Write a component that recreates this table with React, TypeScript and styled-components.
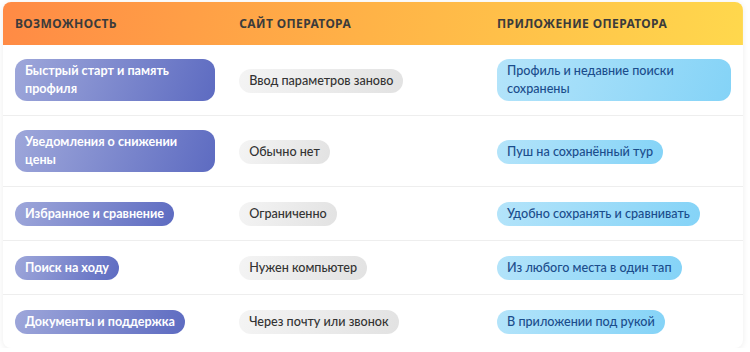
import React from 'react'
import styled, {createGlobalStyle} from 'styled-components';

const GlobalStyle = createGlobalStyle`
    body {
        margin: 0;
        background: #ffffff;
        font-family: "Noto Sans", "Open Sans", sans-serif;
    }
`;

const Page = styled.div`
    padding: 2px 7px 0 3px;
`;

const Card = styled.div`
    background: #fff;
    border-radius: 8px;
    overflow: hidden;
    box-shadow: 0 1px 6px rgba(0,0,0,0.08);
`;

const Table = styled.table`
    width: 100%;
    border-collapse: collapse;
    table-layout: fixed;
`;

const HeadRow = styled.tr`
    background: linear-gradient(100deg, #ff8a45 0%, #ffb347 50%, #ffd84d 100%);
`;

const HeadCell = styled.th<{w: string}>`
    width: ${p => p.w};
    height: 43px;
    padding: 0 12px;
    text-align: left;
    font-size: 12px;
    font-weight: 700;
    letter-spacing: 0.4px;
    text-transform: uppercase;
    color: #3b3b3b;
`;

const Row = styled.tr`
    border-bottom: 1px solid #eeeeee;
    &:last-child { border-bottom: none; }
`;

const Cell = styled.td`
    padding: 14px 12px;
    vertical-align: middle;
`;

type Kind = 'feature' | 'site' | 'app';

const Pill = styled.span<{kind: Kind}>`
    display: inline-block;
    padding: 3px 10px;
    font-family: Lato, Roboto, sans-serif;
    font-size: 12.6px;
    line-height: 18px;
    border-radius: 12px;
    ${p => p.kind === 'feature' && `
        background: linear-gradient(110deg, #9ea7da 0%, #5d6bc1 100%);
        color: #fff;
        font-weight: 700;
    `}
    ${p => p.kind === 'site' && `
        background: linear-gradient(110deg, #f4f4f4 0%, #e2e2e2 100%);
        color: #333;
        font-weight: 500;
    `}
    ${p => p.kind === 'app' && `
        background: linear-gradient(110deg, #b4e4fa 0%, #84d3f7 100%);
        color: #1b4d8c;
        font-weight: 500;
    `}
`;

const rows = [
    ['Быстрый старт и память профиля', 'Ввод параметров заново', 'Профиль и недавние поиски сохранены'],
    ['Уведомления о снижении цены', 'Обычно нет', 'Пуш на сохранённый тур'],
    ['Избранное и сравнение', 'Ограниченно', 'Удобно сохранять и сравнивать'],
    ['Поиск на ходу', 'Нужен компьютер', 'Из любого места в один тап'],
    ['Документы и поддержка', 'Через почту или звонок', 'В приложении под рукой'],
];

export default function App() {
    return (
        <Page>
            <GlobalStyle/>
            <Card>
                <Table>
                    <thead>
                        <HeadRow>
                            <HeadCell w="30%">Возможность</HeadCell>
                            <HeadCell w="35%">Сайт оператора</HeadCell>
                            <HeadCell w="35%">Приложение оператора</HeadCell>
                        </HeadRow>
                    </thead>
                    <tbody>
                        {rows.map(r => (
                            <Row key={r[0]}>
                                <Cell><Pill kind="feature">{r[0]}</Pill></Cell>
                                <Cell><Pill kind="site">{r[1]}</Pill></Cell>
                                <Cell><Pill kind="app">{r[2]}</Pill></Cell>
                            </Row>
                        ))}
                    </tbody>
                </Table>
            </Card>
        </Page>
    )
}
